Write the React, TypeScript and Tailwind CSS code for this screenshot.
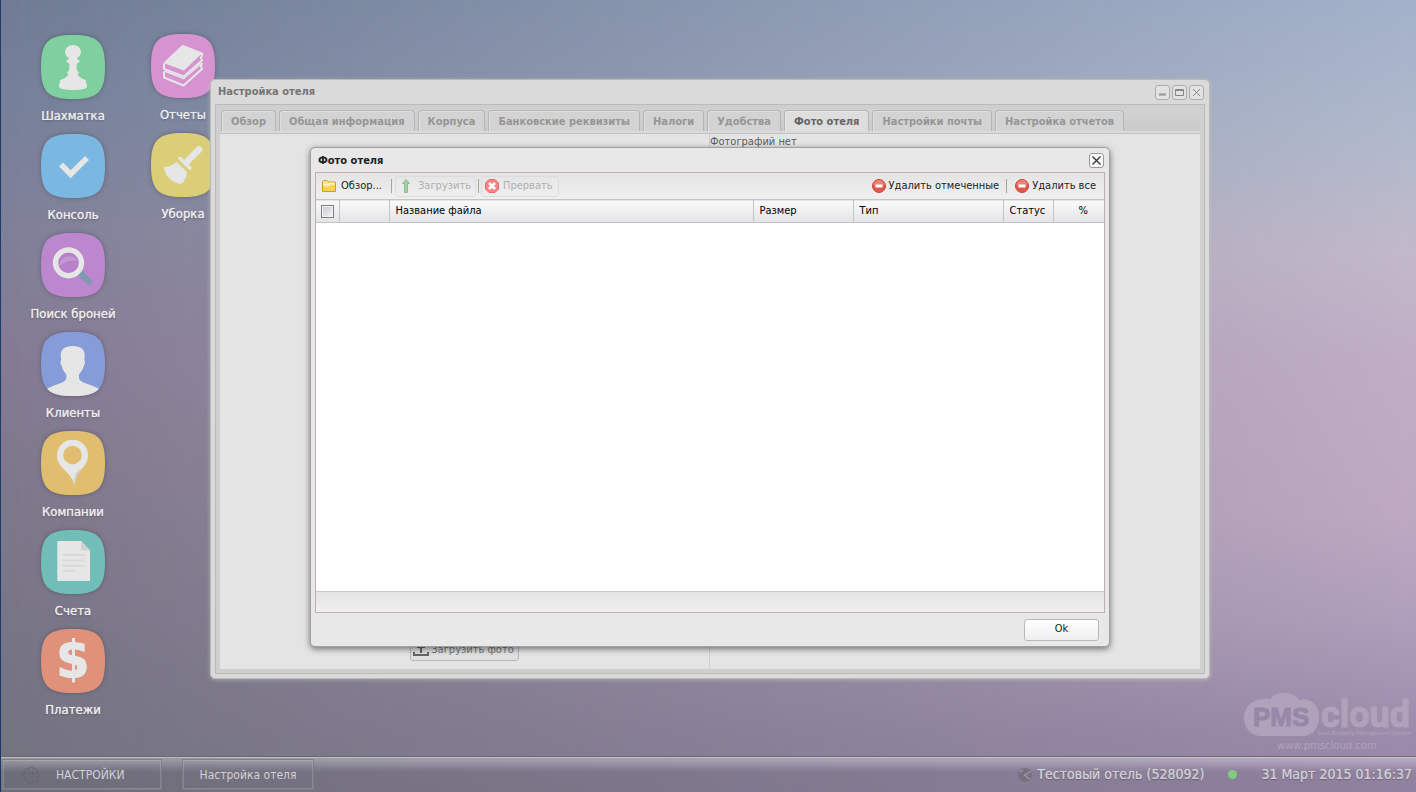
import React from 'react';

const TILE = 'M32 0C57 0 64 7 64 32S57 64 32 64 0 57 0 32 7 0 32 0Z';

const Tile = ({ color, children }: { color: string; children: React.ReactNode }) => (
  <svg viewBox="0 0 64 64" className="size-16 drop-shadow-[0_0_2px_rgba(60,60,70,0.5)]" aria-hidden="true">
    <path d={TILE} fill={color} />
    {children}
  </svg>
);

const ink = '#e6e6e6';

const icons = {
  pawn: (
    <Tile color="#7fcf9f">
      <ellipse cx="32" cy="17" rx="8" ry="7" fill={ink} />
      <path
        fill={ink}
        d="M28 22.500C28 24.500 26.500 25.500 24.700 26L28.300 29C28.500 32 28.300 34 27.700 36L25.500 37.500 27.500 39C26.500 41.500 24 43.500 20.500 44.500 18.500 45.300 18.500 47 19 48.300 17.700 49.300 17.700 51 18.300 52.500 20 54.300 25 55 32 55S44 54.300 45.700 52.500C46.300 51 46.300 49.300 45 48.300 45.500 47 45.500 45.300 43.500 44.500 40 43.500 37.500 41.500 36.500 39L38.500 37.500 36.300 36C35.700 34 35.500 32 35.700 29L39.300 26C37.500 25.500 36 24.500 36 22.500Z"
      />
    </Tile>
  ),
  check: (
    <Tile color="#7bb8e1">
      <path d="M20 30.500L29.700 40.300 46 24" fill="none" stroke={ink} strokeWidth="5.600" />
    </Tile>
  ),
  search: (
    <Tile color="#bd87d0">
      <path d="M39 40L48.300 49" stroke="#7f99b0" strokeWidth="6" strokeLinecap="round" />
      <circle cx="27.500" cy="30" r="12.500" fill="#b981cc" />
      <path d="M18 34A10.500 10.500 0 0 1 37 27.500C28 27 22 29 18 34Z" fill="#c397d1" />
      <circle cx="27.500" cy="29.800" r="13" fill="none" stroke={ink} strokeWidth="5.300" />
    </Tile>
  ),
  person: (
    <Tile color="#869cd8">
      <path
        fill={ink}
        d="M31.700 14C40 14 44 17.500 43.700 24L43.300 28C44.500 29 44.200 32.500 42.700 34 42 36.500 41.300 38.500 38 42.500V46C38.500 51 48 51.500 58 56.700 53 62.500 45 64 32 64S11 62.500 6 56.700C16 51.500 25 51 25.300 46V42.500C22 38.500 21.500 36.500 20.700 34 19.200 32.500 19 29 20.200 28L19.700 24C19.400 17.500 23.500 14 31.700 14Z"
      />
    </Tile>
  ),
  pin: (
    <Tile color="#e1be6f">
      <path
        fill={ink}
        fillRule="evenodd"
        d="M31.500 8.800A15.500 15.200 0 0 1 47 24C47 30 44.500 34 40.500 38 36.500 43 35 47 33.700 54.700 32 48 28 43 22.500 38 18.500 34 16 30 16 24A15.500 15.200 0 0 1 31.500 8.800ZM31.500 14.800A9.300 9.200 0 1 0 31.500 33.200 9.300 9.200 0 0 0 31.500 14.800Z"
      />
      <path d="M41 37.500C37 42.500 35 47 33.700 54.700 32.500 47 34 40 41 37.500Z" fill="#d0cdc6" />
    </Tile>
  ),
  doc: (
    <Tile color="#71bdb7">
      <path fill={ink} d="M17.300 11H40L49 20.500V50Q49 51 48 51H17.300Q16.300 51 16.300 50V12Q16.300 11 17.300 11Z" />
      <path fill="#d2d2d2" d="M40 11L49 20.500H41Q40 20.500 40 19.500Z" />
      <path d="M21.700 25H44M21.700 30.500H44M21.700 35.700H44M21.700 41H34" stroke="#d9d9d9" strokeWidth="2" />
    </Tile>
  ),
  dollar: (
    <Tile color="#e0917a">
      <path d="M32.500 9V53.500" stroke={ink} strokeWidth="3" />
      <text
        x="32"
        y="48"
        textAnchor="middle"
        fontFamily="'DejaVu Sans', sans-serif"
        fontWeight="700"
        fontSize="46"
        fill={ink}
        stroke={ink}
      >
        S
      </text>
    </Tile>
  ),
  books: (
    <Tile color="#d693d0">
      <path d="M31.500 10.700L51.700 18.700 33 36.500 12.300 29Z" fill={ink} />
      <g fill="none" stroke={ink} strokeWidth="2" strokeLinejoin="round">
        <path d="M13 29.500V35L32.700 42.500 51 26.500 50 24 51.500 19" />
        <path d="M13.500 37L32.700 44.500 51 29" strokeWidth="1.500" />
        <path d="M13 37.500V43.500L32.500 51.500 51 35 50 32.500 51 29" />
      </g>
    </Tile>
  ),
  broom: (
    <Tile color="#dbce78">
      <path d="M48 16.500L37 27.500" stroke={ink} strokeWidth="6.600" strokeLinecap="round" />
      <path d="M29 25.500L39 35" stroke={ink} strokeWidth="3.600" strokeLinecap="round" />
      <path
        fill={ink}
        d="M25.500 29L35.500 38.500C36 43 34 48.500 29.500 51.200 21 49.500 14 43 12.700 34 17 34 22 32.500 25.500 29Z"
      />
    </Tile>
  ),
};

const columnOne = [
  ['Шахматка', icons.pawn],
  ['Консоль', icons.check],
  ['Поиск броней', icons.search],
  ['Клиенты', icons.person],
  ['Компании', icons.pin],
  ['Счета', icons.doc],
  ['Платежи', icons.dollar],
] as const;

const columnTwo = [
  ['Отчеты', icons.books],
  ['Уборка', icons.broom],
] as const;

const Shortcut = ({ label, children }: { label: string; children: React.ReactNode }) => (
  <button type="button" className="flex h-[99px] w-[110px] flex-col items-center gap-2">
    {children}
    <span className="text-[13px] leading-[18px] whitespace-nowrap text-[#ececec] [text-shadow:0_0_1px_#ececec,0_1px_2px_rgba(60,60,70,0.7)]">
      {label}
    </span>
  </button>
);

const tabs = [
  'Обзор',
  'Общая информация',
  'Корпуса',
  'Банковские реквизиты',
  'Налоги',
  'Удобства',
  'Фото отеля',
  'Настройки почты',
  'Настройка отчетов',
];

const WindowButton = ({ label, d }: { label: string; d: string }) => (
  <button
    type="button"
    aria-label={label}
    className="flex size-[15px] items-center justify-center rounded-[3px] border border-[#adadad] bg-[#e2e2e2] text-[#858585]"
  >
    <svg viewBox="0 0 13 13" className="size-[13px] shrink-0" fill="none" stroke="currentColor" aria-hidden="true">
      <path d={d} />
    </svg>
  </button>
);

const RemoveIcon = () => (
  <svg viewBox="0 0 16 16" className="size-4 shrink-0" aria-hidden="true">
    <circle cx="8" cy="8" r="6.500" fill="#e2574c" stroke="#c8473d" />
    <path d="M2.500 7.500A5.500 5.500 0 0 1 13.500 7.500Z" fill="#ee8275" />
    <rect x="4.500" y="6.500" width="7" height="3" rx="0.500" fill="#fff" />
  </svg>
);

const Separator = () => <span className="h-[14px] w-px bg-[#a5a599]" />;

const Logo = () => (
  <svg viewBox="0 0 170 62" className="h-[62px] w-[170px]" role="img" aria-label="PMS cloud">
    <g fill="#b0a2ba">
      <path d="M19 7.500C22 6 25 6.500 27 7.500 31-1.500 50-2 56 8 68 4.500 76 14 76 25.500 76 36 69 44 60 44H18C8 44 1 36 1 26 1 15.500 9 7.500 19 7.500Z" />
      <text x="78" y="35" fontFamily="Roboto, sans-serif" fontWeight="700" fontSize="36" stroke="#b0a2ba" strokeLinejoin="round">
        cloud
      </text>
      <text x="168" y="43" textAnchor="end" fontFamily="Lato, sans-serif" fontSize="6">
        SaaS Property Management System
      </text>
      <text x="34" y="57" fontFamily="'DejaVu Sans', sans-serif" fontSize="10">
        www.pmscloud.com
      </text>
    </g>
    <text x="10" y="34" fontFamily="'Liberation Sans', sans-serif" fontWeight="700" fontSize="26" fill="#9888a8" stroke="#9888a8">
      PMS
    </text>
  </svg>
);

const HotelWindow = () => (
  <section className="absolute top-[79px] left-[210px] flex h-[600px] w-[1000px] flex-col rounded-[5px] border border-[#b9b9b9] bg-[#dadada] px-1 pb-1 shadow-[0_1px_4px_rgba(190,200,190,0.6)]">
    <header className="flex h-6 items-center justify-between pr-px pl-[3px]">
      <h2 className="pt-px text-[11px] font-bold text-[#757575]">Настройка отеля</h2>
      <div className="flex gap-[2px]">
        <WindowButton label="Свернуть" d="M3 9H10M3 8H10" />
        <WindowButton label="Развернуть" d="M2.500 3.500H10.500V9.500H2.500ZM2 4.500H11" />
        <WindowButton label="Закрыть" d="M3 3L10 10M10 3L3 10" />
      </div>
    </header>
    <div className="flex flex-1 flex-col border border-[#bcb9b9] bg-[#cfcfcf] px-1 pt-1 pb-1">
      <nav className="flex h-[22px] items-end gap-[3px] bg-linear-to-b from-[#d2d2d2] to-[#cbcbcb] px-px">
        {tabs.map((t) => (
          <button
            key={t}
            type="button"
            className={
              t === 'Фото отеля'
                ? 'h-[21px] rounded-t-[4px] border border-b-0 border-[#b5b5b5] bg-[#dedede] px-[9px] pt-[2px] text-[11px] font-bold whitespace-nowrap text-[#666666] shadow-[inset_1px_1px_0_#e8e8e8]'
                : 'h-[21px] rounded-t-[4px] border border-b-0 border-[#b5b5b5] bg-[#d3d3d3] px-[9px] pt-[2px] text-[11px] font-bold whitespace-nowrap text-[#969696] shadow-[inset_1px_1px_0_#e0e0e0]'
            }
          >
            {t}
          </button>
        ))}
      </nav>
      <div className="h-[3px] border-b border-[#c2c2c2] bg-[#dadada]" />
      <div className="flex flex-1 bg-[#e4e4e4]">
        <div className="flex w-1/2 items-end justify-center border-r border-[#cfcfcf] pb-2">
          <button
            type="button"
            className="flex h-[22px] items-center gap-[2px] rounded-[3px] border border-[#b8b8b8] bg-[#e0e0e0] pr-1 pl-[2px] text-[11px] whitespace-nowrap text-[#777777]"
          >
            <svg viewBox="0 0 16 16" className="size-4" fill="none" stroke="#666" strokeWidth="2" aria-hidden="true">
              <path d="M1 10V13H15V10M8 11V4M4 5H12" />
            </svg>
            Загрузить фото
          </button>
        </div>
        <p className="text-[11px] leading-4 text-[#5c5c5c]">Фотографий нет</p>
      </div>
    </div>
  </section>
);

const PhotoDialog = () => (
  <section
    role="dialog"
    aria-label="Фото отеля"
    className="absolute top-[147px] left-[310px] flex h-[500px] w-[800px] flex-col rounded-[5px] border border-[#a0a0a0] bg-[#e8e8e8] px-1 shadow-[0_2px_6px_rgba(0,0,0,0.5)]"
  >
    <header className="flex h-6 items-center justify-between pr-px pl-[3px]">
      <h2 className="pt-[2px] text-[11px] font-bold text-[#222222]">Фото отеля</h2>
      <button
        type="button"
        aria-label="Закрыть"
        className="flex size-[15px] items-center justify-center rounded-[3px] border border-[#999999] bg-[#f8f8f8] text-[#333333]"
      >
        <svg viewBox="0 0 13 13" className="size-[13px] shrink-0" fill="none" stroke="currentColor" strokeWidth="1.300" aria-hidden="true">
          <path d="M2.500 2.500L10.500 10.500M10.500 2.500L2.500 10.500" />
        </svg>
      </button>
    </header>
    <div className="flex flex-1 flex-col border border-[#bcb0b2] bg-white">
      <div className="flex h-[26px] items-center bg-linear-to-b from-[#e4e4e4] to-[#f0f0f0] text-[11px] text-[#222222]">
        <button type="button" className="flex w-[75px] items-center gap-1 pl-[5px]">
          <svg viewBox="0 0 16 16" className="size-4 shrink-0" aria-hidden="true">
            <path d="M1.500 13.500V3.500L2.500 2.500H6L7.500 4H14.500V13.500Z" fill="#fbe08a" stroke="#d49a2a" />
            <path d="M2.500 6.500H8L9 5.500H13.500" stroke="#fff6cf" strokeWidth="1.500" fill="none" />
            <path d="M2 13V9H8L9.500 7.500H14V13Z" fill="#f6d254" />
          </svg>
          Обзор...
        </button>
        <Separator />
        <button
          type="button"
          disabled
          className="mr-[2px] ml-[3px] flex h-[21px] w-[81px] items-center gap-1 rounded-[3px] border border-[#dddddd] pl-[2px] text-[#b0b0b0]"
        >
          <svg viewBox="0 0 16 16" className="size-4 shrink-0" aria-hidden="true">
            <path d="M8 1.500L11.500 5.500H9.500V14.500H6.500V5.500H4.500Z" fill="#a3cfa5" stroke="#8fbd92" />
          </svg>
          Загрузить
        </button>
        <Separator />
        <button
          type="button"
          disabled
          className="ml-[2px] flex h-[21px] w-[78px] items-center gap-[3px] rounded-[3px] border border-[#dddddd] pl-[2px] text-[#b0b0b0]"
        >
          <svg viewBox="0 0 16 16" className="size-4 shrink-0" aria-hidden="true">
            <path d="M5 1.500H11L14.500 5V11L11 14.500H5L1.500 11V5Z" fill="#f28585" stroke="#e86a6a" />
            <path d="M5 5L11 11M11 5L5 11" stroke="#fff" strokeWidth="2.600" />
          </svg>
          Прервать
        </button>
        <div className="ml-auto flex items-center gap-[7px] pr-2">
          <button type="button" className="flex items-center gap-[2px]">
            <RemoveIcon />
            Удалить отмеченные
          </button>
          <Separator />
          <button type="button" className="flex items-center gap-[2px]">
            <RemoveIcon />
            Удалить все
          </button>
        </div>
      </div>
      <table className="w-full table-fixed border-collapse text-[11px] text-black">
        <thead>
          <tr className="h-[23px] border-y border-[#c5c5c5] bg-linear-to-b from-[#fafafa] to-[#e3e4e6]">
            <th className="w-[23px] border-r border-[#c5c5c5] p-0">
              <input
                type="checkbox"
                aria-label="Выбрать все"
                className="mx-auto block size-[13px] appearance-none border border-[#7d7d7d] bg-linear-to-br from-[#c4c8cf] to-[#f6f6f6] shadow-[inset_0_0_0_1px_#f4f4f4]"
              />
            </th>
            <th className="w-[50px] border-r border-[#c5c5c5]" />
            <th className="border-r border-[#c5c5c5] px-[6px] pt-px text-left font-normal">Название файла</th>
            <th className="w-[100px] border-r border-[#c5c5c5] px-[6px] pt-px text-left font-normal">Размер</th>
            <th className="w-[150px] border-r border-[#c5c5c5] px-[6px] pt-px text-left font-normal">Тип</th>
            <th className="w-[50px] border-r border-[#c5c5c5] px-[6px] pt-px text-left font-normal">Статус</th>
            <th className="w-[51px] pt-px pr-4 text-right font-normal">%</th>
          </tr>
        </thead>
      </table>
      <div className="flex-1" />
      <div className="h-[21px] border-t border-[#c8c8c8] bg-linear-to-b from-[#e4e4e4] to-[#f0f0f0]" />
    </div>
    <footer className="flex h-[33px] items-center justify-end pr-[6px]">
      <button
        type="button"
        className="h-[22px] w-[75px] rounded-[3px] border border-[#b8b8b8] bg-linear-to-b from-white to-[#eeeeee] text-[11px] text-[#222222]"
      >
        Ok
      </button>
    </footer>
  </section>
);

export default function App() {
  return (
    <main className="relative flex h-screen flex-col overflow-hidden border-l border-[#1d3966] bg-[linear-gradient(to_bottom,#6f7c94_0%,#76809a_12%,#7f8098_28%,#847b93_45%,#7d778a_65%,#767484_85%,#73737f_100%)] font-['DejaVu_Sans_Condensed','DejaVu_Sans',sans-serif]">
      <div className="absolute inset-0 bg-[linear-gradient(to_bottom,#a3b2ca_0%,#b2b9cc_18%,#c2b9ca_32%,#c0aec6_45%,#bea9c2_65%,#b09fbb_78%,#9c8bab_93%,#9888a8_100%)] [mask-image:linear-gradient(to_right,transparent,black)]" />

      <div className="relative flex flex-1 items-start pt-[35px] pl-[17px]">
        <div className="flex flex-col">
          {columnOne.map(([label, icon]) => (
            <Shortcut key={label} label={label}>
              {icon}
            </Shortcut>
          ))}
        </div>
        <div className="-mt-px flex flex-col">
          {columnTwo.map(([label, icon]) => (
            <Shortcut key={label} label={label}>
              {icon}
            </Shortcut>
          ))}
        </div>
        <div className="ml-auto self-end pr-[3px] pb-[2px]">
          <Logo />
        </div>
      </div>

      <div className="absolute inset-0 -left-px">
        <HotelWindow />
        <PhotoDialog />
      </div>

      <footer className="relative flex h-9 items-center border-t border-[#6a6870] bg-linear-to-b from-white/25 from-10% to-black/5 to-45% pr-1 pl-px text-[#d2d0d4] shadow-[inset_0_1px_0_rgba(255,255,255,0.35)] [text-shadow:0_0_1px_rgba(210,208,212,0.8),0_1px_1px_rgba(60,60,70,0.6)]">
        <button
          type="button"
          className="mr-5 flex h-[31px] w-[160px] items-center gap-4 border border-[#7f7d86] pl-[19px] text-[12px] shadow-[inset_0_0_0_1px_rgba(255,255,255,0.15)]"
        >
          <svg viewBox="0 0 18 18" className="size-[18px]" fill="none" stroke="#67656e" aria-hidden="true">
            <path d="M7.500 1H10.500L11 3.500 13.500 2.500 15.500 4.500 14.500 7 17 7.500V10.500L14.500 11 15.500 13.500 13.500 15.500 11 14.500 10.500 17H7.500L7 14.500 4.500 15.500 2.500 13.500 3.500 11 1 10.500V7.500L3.500 7 2.500 4.500 4.500 2.500 7 3.500Z" />
            <circle cx="9" cy="9" r="2.500" />
          </svg>
          НАСТРОЙКИ
        </button>
        <button
          type="button"
          className="h-[31px] w-[132px] border border-[#7f7d86] text-[12px] shadow-[inset_0_0_0_1px_rgba(255,255,255,0.15)]"
        >
          Настройка отеля
        </button>
        <div className="ml-auto flex items-center text-[14px]">
          <svg viewBox="0 0 16 16" className="mr-1 size-4" aria-hidden="true">
            <circle cx="8" cy="8" r="7" fill="#76707f" />
            <path d="M13.500 4.500L7.500 8 12.500 12M3 5L6 3" stroke="#a29aa8" strokeWidth="1.300" fill="none" />
          </svg>
          <span>Тестовый отель (528092)</span>
          <span className="mx-6 size-[9px] rounded-full bg-[#7fcd81]" />
          <time>31 Март 2015 01:16:37</time>
        </div>
      </footer>
    </main>
  );
}
